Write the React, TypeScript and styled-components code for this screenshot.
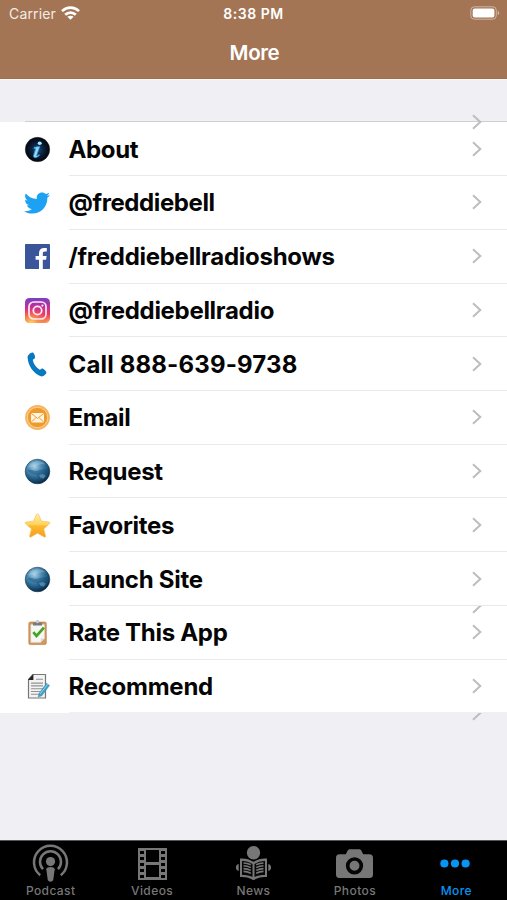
import React from "react";
import styled, { createGlobalStyle } from "styled-components";
import { FaTwitter } from "react-icons/fa";

const GlobalStyle = createGlobalStyle`
  * { box-sizing: border-box; }
  body { margin: 0; background: #efeff4; font-family: Inter, "Liberation Sans", sans-serif; }
`;

const Screen = styled.div`
  display: flex;
  flex-direction: column;
  width: 507px;
  height: 900px;
  overflow: hidden;
  background: #efeff4;
`;

const Header = styled.header`
  height: 79px;
  flex: none;
  background: #a37555;
  color: #fff;
  border-bottom: 1px solid #a06f4f;
`;

const StatusBar = styled.div`
  display: grid;
  grid-template-columns: 1fr auto 1fr;
  align-items: center;
  height: 27px;
  padding: 0 7px 0 9px;
`;

const Carrier = styled.div`
  display: flex;
  align-items: center;
  gap: 5px;
  font-size: 14px;
  color: #f5ebe4;
  letter-spacing: 0.15px;

  svg { margin-top: -2px; }
`;

const Clock = styled.div`
  font-size: 14px;
  font-weight: 600;
  letter-spacing: 0.5px;
  margin-right: 2px;
`;

const BatterySlot = styled.div`
  display: flex;
  justify-content: flex-end;

  svg { margin-top: -1px; }
`;

const Title = styled.h1`
  margin: 0;
  padding-left: 2px;
  height: 51px;
  line-height: 52px;
  font-size: 20.5px;
  font-weight: 600;
  letter-spacing: -0.35px;
  text-align: center;
`;

const SectionGap = styled.div`
  display: flex;
  flex: none;
  height: 43.4px;
  padding-left: 25px;
  align-items: flex-end;
  border-top: 1px solid #f8f8fb;
`;

const SectionLine = styled.div`
  flex: 1;
  height: 1px;
  background: #cfcfd3;
`;

const List = styled.ul`
  list-style: none;
  margin: 0;
  padding: 0;
  flex: none;
`;

const Row = styled.li`
  position: relative;
  display: flex;
  height: 53.72px;
  padding-left: 24px;
  background: #fff;
`;

const IconSlot = styled.div`
  display: flex;
  align-items: center;
  width: 44.5px;
  flex: none;

  svg { display: block; }
`;

const RowBody = styled.div<{ $last: boolean }>`
  display: flex;
  flex: 1;
  align-items: center;
  justify-content: space-between;
  padding-right: 24px;
  border-bottom: 1px solid ${(p) => (p.$last ? "#efeff4" : "#e9e9eb")};
`;

const Label = styled.span<{ $spacing: number }>`
  padding-top: 2px;
  font-size: 24px;
  font-weight: 650;
  line-height: 30px;
  letter-spacing: ${(p) => p.$spacing}px;
  color: #050505;
  white-space: nowrap;
`;

const StrayChevron = styled.span<{ $clipped: boolean }>`
  position: absolute;
  z-index: 1;
  right: 24px;
  top: ${(p) => (p.$clipped ? "0" : "-8px")};
  height: ${(p) => (p.$clipped ? "8px" : "16px")};
  overflow: hidden;

  svg { display: block; margin-top: ${(p) => (p.$clipped ? "-8px" : "0")}; }
`;

const ListEnd = styled.div`
  position: relative;
  flex: 1;
`;

const TabBar = styled.nav`
  display: grid;
  grid-template-columns: repeat(5, 1fr);
  height: 60px;
  flex: none;
  background: #000;
  border-top: 1px solid #555;
`;

const Tab = styled.div<{ $active: boolean }>`
  display: flex;
  flex-direction: column;
  align-items: center;
  color: ${(p) => (p.$active ? "#0894f5" : "#777")};

  svg { display: block; margin-top: 3px; }
`;

const TabLabel = styled.span`
  font-size: 12px;
  line-height: 16px;
  font-weight: 450;
  letter-spacing: 0.4px;
`;

const Wifi = () => (
  <svg width="19" height="14" viewBox="0 0 19 14" fill="none" stroke="#fff" strokeWidth="2.7">
    <path d="M1 5.1C5.8.4 13.2.4 18 5.1M4.2 8.7c3-2.9 7.6-2.9 10.6 0" />
    <path d="M9.5 13.8 6.4 10.8c1.7-1.5 4.5-1.5 6.2 0Z" fill="#fff" stroke="none" />
  </svg>
);

const Battery = () => (
  <svg width="30" height="14" viewBox="0 0 30 14">
    <rect x=".8" y=".8" width="25.5" height="12.4" rx="3.5" fill="none" stroke="#cfb5a2" />
    <rect x="2.7" y="2.6" width="21.7" height="8.8" rx="2" fill="#fff" />
    <path d="M27.7 4.8c2 .7 2 3.7 0 4.4Z" fill="#cfb5a2" />
  </svg>
);

const Chevron = () => (
  <svg width="12" height="16" viewBox="0 0 12 16" fill="none" stroke="#bdbdc0" strokeWidth="2">
    <path d="M2 1.3 9.3 8 2 14.7" />
  </svg>
);

const InfoIcon = () => (
  <svg width="27" height="27" viewBox="0 0 27 27">
    <defs>
      <radialGradient id="info"><stop offset="0" stopColor="#155083" /><stop offset=".55" stopColor="#0b1d38" /><stop offset="1" stopColor="#020509" /></radialGradient>
    </defs>
    <circle cx="13.5" cy="13.5" r="12.2" fill="url(#info)" stroke="#222a32" strokeWidth=".5" />
    <ellipse cx="15.7" cy="7.2" rx="2" ry="1.8" fill="#a7e8ff" />
    <path d="m10.2 11.3 5.6-.9-3 8.7c-.4 1.2.6.9 2.3-.5l.5.7c-3.4 3.4-7 3-5.9-.4l2-6.1-1.8-.3Z" fill="#8bdcfd" stroke="#398ecb" strokeWidth=".8" />
  </svg>
);

const TwitterIcon = () => <FaTwitter size={26} color="#1da1f2" />;

const FacebookIcon = () => (
  <svg width="27" height="27" viewBox="0 0 27 27">
    <rect x="1" y="1" width="25" height="25" rx=".8" fill="#3b559b" />
    <path d="M15 26v-9.3h-3.4v-3.6H15v-2.8c0-3.6 2-5.4 5.2-5.4 1.2 0 2.1.1 2.6.2v3.3h-1.9c-1.7 0-2.1.8-2.1 2.1v2.6h3.8l-.5 3.6h-3.3V26Z" fill="#fff" />
  </svg>
);

const InstagramIcon = () => (
  <svg width="27" height="27" viewBox="0 0 27 27" fill="none">
    <defs>
      <linearGradient id="instaBase" x1=".5" y1="0" x2=".5" y2="1"><stop stopColor="#7640c5" /><stop offset=".35" stopColor="#bf2f9c" /><stop offset=".67" stopColor="#ef3c62" /><stop offset="1" stopColor="#fbb04f" /></linearGradient>
      <radialGradient id="instaGlow" cx=".25" cy="1.05" r=".7"><stop stopColor="#ffdc74" /><stop offset=".35" stopColor="#fa9b49" /><stop offset="1" stopColor="#ec3f61" stopOpacity="0" /></radialGradient>
    </defs>
    <rect x="1" y="1" width="25" height="25" rx="4.5" fill="url(#instaBase)" />
    <rect x="1" y="1" width="25" height="25" rx="4.5" fill="url(#instaGlow)" />
    <rect x="5" y="5" width="17" height="17" rx="4.7" stroke="#ffe9f2" strokeWidth="1.7" />
    <circle cx="13.5" cy="13.5" r="4.2" stroke="#ffe9f2" strokeWidth="1.8" />
    <circle cx="18.4" cy="8.6" r="1.1" fill="#ffe9f2" />
  </svg>
);

const PhoneIcon = () => (
  <svg width="27" height="27" viewBox="0 0 27 27">
    <path d="M5 3.4C6.5 1.8 8.7 1 9.5 2.1c1 1.2 2.1 4.1 1.4 5.2-.8.9-2.3 1-2.1 2 .8 3.8 3.3 7 6.6 9.3.8.6 1.4-1 2.6-1.2 1.2-.2 4.2 2.5 4.4 3.7.3 1.8-2.6 4.3-4.8 4.3C9.1 22.7 4.1 14.2 3.6 6.4c0-1.3.5-2.3 1.4-3Z" fill="#0878c2" />
  </svg>
);

const EmailIcon = () => (
  <svg width="27" height="27" viewBox="0 0 27 27">
    <circle cx="13.5" cy="13.5" r="12.4" fill="#f5b461" />
    <circle cx="13.5" cy="13.5" r="10.2" fill="#ef9a2d" stroke="#ffd9a2" strokeWidth=".8" />
    <rect x="7" y="9" width="13" height="9.5" rx="1" fill="#fff4df" />
    <path d="m7.2 9.4 6.3 5 6.3-5M7.3 18l4.5-4.2m7.9 4.2-4.5-4.2" fill="none" stroke="#f29d32" strokeWidth="1" />
  </svg>
);

const GlobeIcon = () => (
  <svg width="27" height="27" viewBox="0 0 27 27">
    <defs>
      <radialGradient id="globe" cx=".38" cy=".3" r=".72"><stop stopColor="#aad1e4" /><stop offset=".32" stopColor="#5a96bb" /><stop offset=".66" stopColor="#24628c" /><stop offset="1" stopColor="#092640" /></radialGradient>
    </defs>
    <circle cx="13.5" cy="13.5" r="12.3" fill="url(#globe)" stroke="#173b55" strokeWidth=".6" />
    <path d="M4 12c3-1 5 .7 9 .8l8-1.8 3.7 2c0 3-1 5-2.5 7l-3.6-1.8-3 2.7-3-3.8-4.5-1L4 13Z" fill="#174e78" opacity=".45" />
    <path d="m15 17 4-1 2.8 1.7-2.2 3-3.5-1.2Z" fill="#75adca" opacity=".55" />
    <path d="M4 9.6C6 3 17 .8 21.6 6.6 16 5 11 8.9 4 9.6Z" fill="#d1edf6" opacity=".25" />
  </svg>
);

const StarIcon = () => (
  <svg width="27" height="27" viewBox="0 0 27 27">
    <defs><linearGradient id="star" x2="0" y2="1"><stop stopColor="#fff0aa" /><stop offset=".45" stopColor="#ffd45d" /><stop offset=".52" stopColor="#fdba30" /><stop offset="1" stopColor="#f79b20" /></linearGradient></defs>
    <path d="M13.5 1.7c.8 0 1 .5 1.3 1.2l2.6 6.2 7.6.9c1.2.2 1.2 1 .4 1.8l-5.6 5.1 1.8 7.2c.2 1-.6 1.4-1.5.9l-6.5-3.8L7 25c-.9.5-1.7 0-1.4-1l1.8-7.1-5.8-5.1c-.9-.8-.6-1.7.4-1.8l7.4-.9 2.8-6.2c.3-.8.6-1.2 1.3-1.2Z" fill="url(#star)" stroke="#f2c15d" strokeWidth=".6" />
  </svg>
);

const ClipboardIcon = () => (
  <svg width="27" height="27" viewBox="0 0 27 27">
    <rect x="4.8" y="3" width="17.5" height="22.6" rx="1.5" fill="#d3965b" stroke="#b67a45" strokeWidth=".6" />
    <path d="M6.8 5.5h13.7v13.9l-4 4H6.8Z" fill="#f6f6f3" stroke="#d7d7d2" strokeWidth=".5" />
    <path d="m16.6 23.5.3-4 3.6.1Z" fill="#d7d7d2" />
    <path d="M9 3.4h2.8a1.8 1.8 0 0 1 3.4 0H18v3H9Z" fill="#777b7e" />
    <circle cx="13.5" cy="2.5" r="1.7" fill="#c8cacb" />
    <path d="m9.3 13.2 3.2 3.7 7.4-8.3" fill="none" stroke="#42a526" strokeWidth="2.7" />
  </svg>
);

const DocumentIcon = () => (
  <svg width="27" height="27" viewBox="0 0 27 27">
    <path d="M9 1.5h12.5V25h-17V6.5Z" fill="#f3f3f3" stroke="#777" strokeWidth="1.2" strokeLinejoin="round" />
    <path d="M9.4 1v6H4Z" fill="#242424" />
    <path d="M12 6.2h7M7 10.1h12M7 12.9h12M7 15.7h12M7 18.5h9M7 21.3h8" stroke="#939393" strokeWidth="1.1" />
    <path d="m15 20.5 7.5-10.2 3 2.2-7.6 10.2-3.7 1.4Z" fill="#459fc5" stroke="#388bb0" strokeWidth=".5" />
    <path d="m16.2 21 7.7-10.2" stroke="#8bd2ec" />
  </svg>
);

const PodcastIcon = () => (
  <svg width="37" height="39" viewBox="0 0 37 39" fill="none" stroke="currentColor" strokeWidth="2.5">
    <path d="M8.2 31.2A16.5 16.5 0 1 1 28.8 31.2M11 25.2a10.5 10.5 0 1 1 15 0" />
    <circle cx="18.5" cy="17.6" r="4.6" fill="currentColor" stroke="none" />
    <path d="M14.3 25.2c0-3 8.4-3 8.4 0l-1.4 10.4c-.4 2.7-5.2 2.7-5.6 0Z" fill="currentColor" stroke="none" />
  </svg>
);

const FilmIcon = () => (
  <svg width="31" height="39" viewBox="0 0 31 39">
    <path fillRule="evenodd" d="M1 4h29v32H1Zm8 2v12h13V6Zm0 15v12h13V21ZM3 7v3h4V7Zm0 6v3h4v-3Zm0 6v3h4v-3Zm0 6v3h4v-3Zm0 6v3h4v-3ZM24 7v3h4V7Zm0 6v3h4v-3Zm0 6v3h4v-3Zm0 6v3h4v-3Zm0 6v3h4v-3Z" fill="currentColor" />
  </svg>
);

const NewsIcon = () => (
  <svg width="37" height="39" viewBox="0 0 37 39">
    <circle cx="18.5" cy="8.8" r="6.7" fill="currentColor" />
    <path d="M5 14.5c5-.4 9.4.6 13.5 3.3 4.1-2.7 8.5-3.7 13.5-3.3V33c-4.5-.4-8 .3-11.3 2.1-1.3 1.2-3.1 1.2-4.4 0C13 33.3 9.5 32.6 5 33Z" fill="currentColor" />
    <path d="M7 17c3.8-.1 7 .8 10.5 3v13c-3.4-1.5-6.8-2.1-10.5-2Zm23 0c-3.8-.1-7 .8-10.5 3v13c3.4-1.5 6.8-2.1 10.5-2Z" fill="#080808" />
    <path d="M8.5 19c2.7.1 5 .7 7.3 1.8m-7.3 1c2.7.1 5 .7 7.3 1.8m-7.3 1c2.7.1 5 .7 7.3 1.8m-7.3 1c2.7.1 5 .7 7.3 1.8M28.5 19c-2.7.1-5 .7-7.3 1.8m7.3 1c-2.7.1-5 .7-7.3 1.8m7.3 1c-2.7.1-5 .7-7.3 1.8m7.3 1c-2.7.1-5 .7-7.3 1.8" fill="none" stroke="currentColor" strokeWidth="1.6" />
    <path d="M3.7 20v7C0 26.4 0 20.6 3.7 20Zm29.6 0v7c3.7-.6 3.7-6.4 0-7Z" fill="currentColor" />
  </svg>
);

const CameraIcon = () => (
  <svg width="39" height="39" viewBox="0 0 39 39">
    <path d="M4.6 10.3h6.2l1.8-3.5c.5-1 1.2-1.5 2.3-1.5h9.2c1.2 0 1.8.5 2.3 1.5l1.8 3.5h6.2c2.4 0 3.6 1.2 3.6 3.6v16.5c0 2.3-1.2 3.6-3.6 3.6H4.6C2.2 34 1 32.7 1 30.4V13.9c0-2.4 1.2-3.6 3.6-3.6Z" fill="currentColor" />
    <circle cx="19.5" cy="21.8" r="6.8" fill="currentColor" stroke="#050505" strokeWidth="3.7" />
  </svg>
);

const DotsIcon = () => (
  <svg width="32" height="39" viewBox="0 0 32 39" fill="currentColor">
    <circle cx="4.4" cy="19.5" r="4.1" /><circle cx="15" cy="19.5" r="4.1" /><circle cx="25.6" cy="19.5" r="4.1" />
  </svg>
);

const rows = [
  { label: "About", Icon: InfoIcon, spacing: -0.35, stray: "full" },
  { label: "@freddiebell", Icon: TwitterIcon, spacing: -0.4 },
  { label: "/freddiebellradioshows", Icon: FacebookIcon, spacing: -0.27 },
  { label: "@freddiebellradio", Icon: InstagramIcon, spacing: -0.3 },
  { label: "Call 888-639-9738", Icon: PhoneIcon, spacing: 0.17 },
  { label: "Email", Icon: EmailIcon, spacing: -0.3 },
  { label: "Request", Icon: GlobeIcon, spacing: -0.3 },
  { label: "Favorites", Icon: StarIcon, spacing: -0.35 },
  { label: "Launch Site", Icon: GlobeIcon, spacing: -0.26 },
  { label: "Rate This App", Icon: ClipboardIcon, spacing: -0.3, stray: "clipped" },
  { label: "Recommend", Icon: DocumentIcon, spacing: -0.26 },
];

const tabs = [
  { label: "Podcast", Icon: PodcastIcon },
  { label: "Videos", Icon: FilmIcon },
  { label: "News", Icon: NewsIcon },
  { label: "Photos", Icon: CameraIcon },
  { label: "More", Icon: DotsIcon, active: true },
];

export default function App() {
  return (
    <>
      <GlobalStyle />
      <Screen>
        <Header>
          <StatusBar>
            <Carrier>Carrier<Wifi /></Carrier>
            <Clock>8:38 PM</Clock>
            <BatterySlot><Battery /></BatterySlot>
          </StatusBar>
          <Title>More</Title>
        </Header>
        <SectionGap><SectionLine /></SectionGap>
        <List>
          {rows.map(({ label, Icon, spacing, stray }, i) => (
            <Row key={label}>
              {stray && <StrayChevron $clipped={stray === "clipped"}><Chevron /></StrayChevron>}
              <IconSlot><Icon /></IconSlot>
              <RowBody $last={i === rows.length - 1}>
                <Label $spacing={spacing}>{label}</Label>
                <Chevron />
              </RowBody>
            </Row>
          ))}
        </List>
        <ListEnd><StrayChevron $clipped><Chevron /></StrayChevron></ListEnd>
        <TabBar>
          {tabs.map(({ label, Icon, active }) => (
            <Tab key={label} $active={!!active}><Icon /><TabLabel>{label}</TabLabel></Tab>
          ))}
        </TabBar>
      </Screen>
    </>
  );
}
